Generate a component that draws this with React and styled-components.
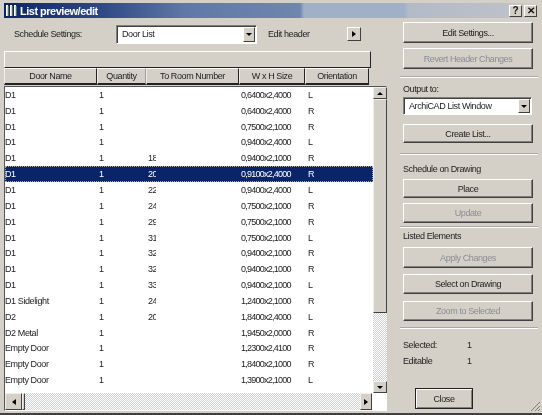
import React from "react";
import styled, { createGlobalStyle, css } from "styled-components";

const Global = createGlobalStyle`
  html, body { margin: 0; padding: 0; background: #d4d0c8; }
  * { box-sizing: border-box; }
`;

const Window = styled.div`
  width: 542px; height: 415px; overflow: hidden; position: relative;
  background: #d4d0c8; padding: 3px 4px 0 4px;
  border-bottom: 2px solid #404040;
  font-family: "Liberation Sans", Arial, sans-serif; font-size: 9px; letter-spacing: -0.4px; color: #222;
  filter: blur(0.35px);
`;
const TitleBar = styled.div`
  height: 15px; display: flex; align-items: center; padding: 0 1px 0 1px; gap: 2px;
  background: linear-gradient(90deg, #0a246a 0, #2f4a86 100px, #5f78a6 180px, #6f86ae 296px, #9fb0c8 300px, #9fb0c8 400px, #b3bac8 404px, #bcc0c8 500px, #d0cfc9 534px);
`;
const TitleText = styled.span`
  color: #fff; font-weight: bold; font-size: 11px; flex: 1; letter-spacing: -0.5px;
`;
const CapButton = styled.button`
  width: 13px; height: 12px; padding: 0; margin: 0; background: #d4d0c8; font: bold 10px "Liberation Sans", sans-serif; color: #111;
  border: 1px solid; border-color: #fff #404040 #404040 #fff; line-height: 9px;
`;
const Body = styled.div`
  display: flex; margin-top: 5px; gap: 12px;
`;
const Left = styled.div`
  width: 387px; flex: none;
`;
const SettingsRow = styled.div`
  display: flex; align-items: center; height: 20px; padding-left: 10px; margin-top: 1px;
`;
const Label = styled.span`
  display: block; white-space: nowrap;
  ${p => p.$w && css`width: ${p.$w}px; flex: none;`}
  ${p => p.$ml && css`margin-left: ${p.$ml}px;`}
`;
const Select = styled.div`
  display: flex; align-items: center; justify-content: space-between;
  height: ${p => p.$h}px; width: ${p => p.$w}px; background: #fff; flex: none;
  margin-top: ${p => p.$mt || 0}px;
  border: 1px solid; border-color: #808080 #fff #fff #808080;
  box-shadow: inset 1px 1px 0 #404040; padding: 1px 1px 1px 5px;
`;
const SelectArrow = styled.span`
  width: 12px; height: 100%; background: #d4d0c8; display: flex; align-items: center; justify-content: center;
  border: 1px solid; border-color: #fff #404040 #404040 #fff;
  &::after { content: ""; border: 3px solid transparent; border-top: 3px solid #000; border-bottom: 0; }
`;
const SmallButton = styled.span`
  width: 14px; height: 14px; background: #d4d0c8; display: flex; align-items: center; justify-content: center; flex: none;
  border: 1px solid; border-color: #fff #404040 #404040 #fff;
  &::after { content: ""; border: 3px solid transparent; border-left: 4px solid #000; border-right: 0; }
`;
const HeaderBlank = styled.div`
  height: 17px; width: 367px; margin-top: 7px;
  border: 1px solid; border-color: #fff #222 #222 #fff;
`;
const HeaderRow = styled.div`
  display: flex; height: 17px; width: 365px;
`;
const HeaderCell = styled.div`
  width: ${p => p.$w}px; flex: none; display: flex; align-items: center; justify-content: center; white-space: nowrap;
  border: 1px solid; border-color: #fff ${p => p.$active ? "#8fa0b8" : "#222"} #222 #eee;
  border-bottom-width: 2px;
`;
const ListFrame = styled.div`
  width: 383px; height: 325px; margin-top: 1px; background: #fff; display: flex; flex-direction: column;
  border: 1px solid; border-color: #555 #fff #fff #555;
`;
const ListMain = styled.div`
  display: flex; height: 306px; flex: none;
`;
const Rows = styled.div`
  width: 368px; flex: none; overflow: hidden;
`;
const Row = styled.div`
  display: flex; height: 15.85px; align-items: center; white-space: nowrap; color: #222;
  ${p => p.$selected && css`
    background: #0a246a; color: #fff; outline: 1px dotted #aaa; outline-offset: -1px;
  `}
`;
const Cell = styled.span`
  width: ${p => p.$w}px; flex: none; overflow: hidden;
  ${p => p.$tight && "letter-spacing: -0.75px;"}
`;
const VScroll = styled.div`
  width: 14px; flex: none; display: flex; flex-direction: column;
  background-color: #fff;
  background-image: repeating-conic-gradient(#d4d0c8 0 25%, #fff 0 50%);
  background-size: 2px 2px;
`;
const HScroll = styled.div`
  height: 17px; width: 367px; flex: none; display: flex; justify-content: space-between; margin-left: 0;
  background-color: #fff;
  background-image: repeating-conic-gradient(#d4d0c8 0 25%, #fff 0 50%);
  background-size: 2px 2px;
`;
const ScrollBtn = styled.span`
  width: ${p => p.$w || 14}px; height: ${p => p.$h || 12}px; flex: none; background: #d4d0c8; display: flex; align-items: center; justify-content: center;
  border: 1px solid; border-color: #eee #404040 #404040 #eee;
  &::after {
    content: ""; border: 3px solid transparent;
    ${p => p.$dir === "up" && "border-bottom-color:#000;border-top:0;"}
    ${p => p.$dir === "down" && "border-top-color:#000;border-bottom:0;"}
    ${p => p.$dir === "left" && "border-right:4px solid #000;border-left:0;"}
    ${p => p.$dir === "right" && "border-left:4px solid #000;border-right:0;"}
  }
`;
const VThumb = styled.span`
  height: 214px; flex: none; background: #d4d0c8;
  border: 1px solid; border-color: #eee #404040 #404040 #eee;
`;
const Track = styled.span` flex: 1; `;
const HThumb = styled.span`
  width: 3px; flex: none; background: #d4d0c8;
  border: 1px solid; border-color: #eee #404040 #404040 #eee;
`;
const HLeft = styled.div` display: flex; `;
const Right = styled.div`
  width: 135px; flex: none; display: flex; flex-direction: column;
`;
const Button = styled.button`
  display: block; width: 130px; height: ${p => p.$h || 21}px; margin: ${p => p.$mt ?? 5}px 0 0 0; padding: 0;
  background: #d4d0c8; font: inherit; letter-spacing: inherit; color: ${p => p.disabled ? "#8a8d96" : "#222"};
  border: 1px solid; border-color: #fff #404040 #404040 #fff;
  box-shadow: inset -1px -1px 0 #808080;
`;
const Separator = styled.div`
  height: 2px; background: #a8a8a8; border-bottom: 1px solid #fff; margin: ${p => p.$mt}px 0 0 -3px;
`;
const Section = styled.span`
  display: block; margin-top: ${p => p.$mt}px; line-height: 11px;
`;
const Stat = styled.div`
  display: flex; margin-top: ${p => p.$mt}px; line-height: 11px;
`;
const Close = styled.button`
  width: 58px; height: 21px; margin: 21px 0 0 12px; padding: 0; background: #d4d0c8; font: inherit; letter-spacing: inherit; color: #222;
  border: 1px solid #222; box-shadow: inset 1px 1px 0 #fff, inset -1px -1px 0 #808080;
`;
const Grip = styled.svg`
  position: absolute; right: 1px; bottom: 1px;
`;

const headers = [["Door Name", 93], ["Quantity", 49, true], ["To Room Number", 93], ["W x H Size", 66], ["Orientation", 64]];
const rows = [
  ["D1", "", "0,6400x2,4000", "L"],
  ["D1", "", "0,6400x2,4000", "R"],
  ["D1", "", "0,7500x2,1000", "R"],
  ["D1", "", "0,9400x2,4000", "L"],
  ["D1", "18", "0,9400x2,1000", "R"],
  ["D1", "20", "0,9100x2,4000", "R"],
  ["D1", "22", "0,9400x2,4000", "L"],
  ["D1", "24", "0,7500x2,1000", "R"],
  ["D1", "29", "0,7500x2,1000", "R"],
  ["D1", "31", "0,7500x2,1000", "L"],
  ["D1", "32", "0,9400x2,1000", "R"],
  ["D1", "32", "0,9400x2,1000", "R"],
  ["D1", "33", "0,9400x2,1000", "L"],
  ["D1 Sidelight", "24", "1,2400x2,1000", "R"],
  ["D2", "20", "1,8400x2,4000", "L"],
  ["D2 Metal", "", "1,9450x2,0000", "R"],
  ["Empty Door", "", "1,2300x2,4100", "R"],
  ["Empty Door", "", "1,8400x2,1000", "R"],
  ["Empty Door", "", "1,3900x2,1000", "L"],
  ["Empty Door", "", "0,7500x2,1000", "R"],
];

export default function App() {
  return (
    <Window>
      <Global />
      <TitleBar>
        <svg width="13" height="13" viewBox="0 0 13 13">
          <path d="M1 1h2v11H1zM5 1h2v11H5zM9 1h2v11H9z" fill="#fff" />
          <path d="M3 2v10M7 2v10M11 2v10" stroke="#8fb08f" />
        </svg>
        <TitleText>List preview/edit</TitleText>
        <CapButton>?</CapButton>
        <CapButton>✕</CapButton>
      </TitleBar>
      <Body>
        <Left>
          <SettingsRow>
            <Label $w={102}>Schedule Settings:</Label>
            <Select $w={141} $h={19}>Door List<SelectArrow /></Select>
            <Label $ml={11} $w={79}>Edit header</Label>
            <SmallButton />
          </SettingsRow>
          <HeaderBlank />
          <HeaderRow>
            {headers.map(([t, w, a]) => <HeaderCell key={t} $w={w} $active={a}>{t}</HeaderCell>)}
          </HeaderRow>
          <ListFrame>
            <ListMain>
              <Rows>
                {rows.map((r, i) => (
                  <Row key={i} $selected={i === 5}>
                    <Cell $w={94}>{r[0]}</Cell>
                    <Cell $w={49}>1</Cell>
                    <Cell $w={8}>{r[1]}</Cell>
                    <Cell $w={85} />
                    <Cell $w={67} $tight>{r[2]}</Cell>
                    <Cell $w={50}>{r[3]}</Cell>
                  </Row>
                ))}
              </Rows>
              <VScroll>
                <ScrollBtn $dir="up" />
                <VThumb />
                <Track />
                <ScrollBtn $dir="down" />
              </VScroll>
            </ListMain>
            <HScroll>
              <HLeft>
                <ScrollBtn $dir="left" $w={17} $h={17} />
                <HThumb />
              </HLeft>
              <ScrollBtn $dir="right" $w={12} $h={17} />
            </HScroll>
          </ListFrame>
        </Left>
        <Right>
          <Button $mt={-1}>Edit Settings...</Button>
          <Button disabled>Revert Header Changes</Button>
          <Separator $mt={7} />
          <Section $mt={6}>Output to:</Section>
          <Select $w={129} $h={18} $mt={2}>ArchiCAD List Window<SelectArrow /></Select>
          <Button $mt={9} $h={19}>Create List...</Button>
          <Separator $mt={10} />
          <Section $mt={9}>Schedule on Drawing</Section>
          <Button $mt={4} $h={19}>Place</Button>
          <Button disabled $h={20}>Update</Button>
          <Separator $mt={3} />
          <Section $mt={3}>Listed Elements</Section>
          <Button disabled $mt={5}>Apply Changes</Button>
          <Button $mt={6} $h={20}>Select on Drawing</Button>
          <Button disabled $mt={7} $h={20}>Zoom to Selected</Button>
          <Separator $mt={6} />
          <Stat $mt={11}><Label $w={64}>Selected:</Label>1</Stat>
          <Stat $mt={5}><Label $w={64}>Editable</Label>1</Stat>
          <Close>Close</Close>
        </Right>
      </Body>
      <Grip width="12" height="12" viewBox="0 0 12 12">
        <path d="M11 2L2 11M11 6L6 11M11 9L9 11" stroke="#808080" fill="none" />
      </Grip>
    </Window>
  );
}
